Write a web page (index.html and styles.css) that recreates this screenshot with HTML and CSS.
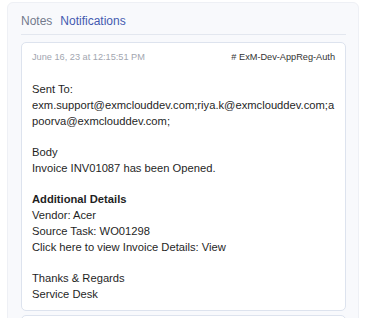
FILE: index.html
```html
<!DOCTYPE html>
<html lang="en">
  <head>
    <meta charset="UTF-8" />
    <title>Notifications</title>
    <link rel="stylesheet" href="styles.css">
  </head>
  <body>
    <div class="panel">
      <div class="tabs">
        <span class="tab">Notes</span>
        <span class="tab active">Notifications</span>
      </div>

      <div class="card">
        <div class="card-head">
          <span class="date">June 16, 23 at 12:15:51 PM</span>
          <span class="tag"># ExM-Dev-AppReg-Auth</span>
        </div>
        <div class="message">
          Sent To:<br>
          exm.support@exmclouddev.com;riya.k@exmclouddev.com;apoorva@exmclouddev.com;<br>
          <br>
          Body<br>
          Invoice INV01087 has been Opened.<br>
          <br>
          <b>Additional Details</b><br>
          Vendor: Acer<br>
          Source Task: WO01298<br>
          Click here to view Invoice Details: View<br>
          <br>
          Thanks &amp; Regards<br>
          Service Desk
        </div>
      </div>

      <!-- next notification, only its top edge is in view -->
      <div class="card card-next"></div>
    </div>
  </body>
</html>
```

FILE: styles.css
```css
body {
  margin: 0;
  background: #ffffff;
  font-family: "Liberation Sans", Arial, sans-serif;
  color: #1f1f1f;
}

.panel {
  margin: 2px 12px 0 7px;
  padding: 0 12px 0 13px;
  background: #f8f9fc;
  border: 1px solid #eef0f5;
  border-radius: 6px;
}

.tabs {
  display: flex;
  gap: 8px;
  padding: 10px 0 5px;
  border-bottom: 1px solid #e3e7ef;
  font-size: 12px;
  line-height: 16px;
}

.tab {
  color: #737a8c;
}

.tab.active {
  color: #4559b0;
}

.card {
  margin-top: 7px;
  background: #ffffff;
  border: 1px solid #dde3ee;
  border-radius: 5px;
  padding: 8px 10px 7px;
}

.card-next {
  margin-top: 4px;
  height: 40px;
}

.card-head {
  display: flex;
  justify-content: space-between;
  font-size: 9.2px;
  line-height: 12px;
}

.date {
  color: #a2a6b0;
}

.tag {
  color: #333333;
}

.message {
  margin-top: 19px;
  font-size: 11.2px;
  line-height: 15.75px;
  word-break: break-all;
}

.message b {
  font-weight: bold;
}
```
